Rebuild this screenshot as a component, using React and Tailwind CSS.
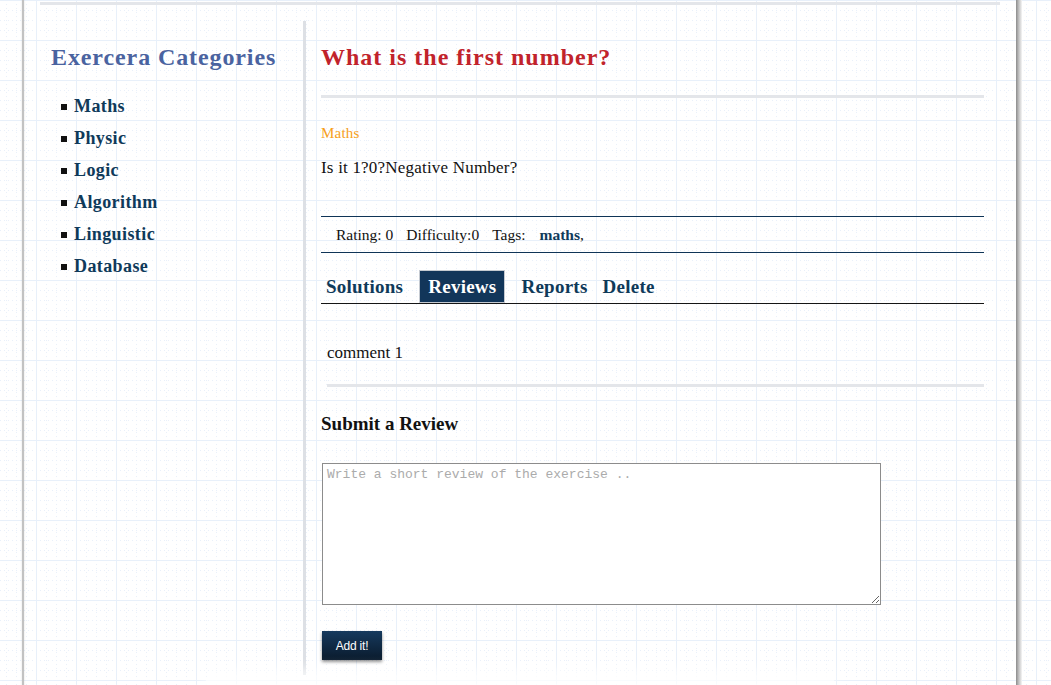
import React from 'react';

const serif = "font-['Liberation_Serif',serif]";

const categories = ['Maths', 'Physic', 'Logic', 'Algorithm', 'Linguistic', 'Database'];

function Sidebar() {
  return (
    <aside className="w-[279px] pt-[22px] pl-[27px]">
      <h2 className={`${serif} text-[24px] leading-[28px] font-bold tracking-[0.9px] text-[#4a63a0]`}>
        Exercera Categories
      </h2>
      <ul className="mt-[19px] pl-[10px]">
        {categories.map((c) => (
          <li key={c} className="flex items-center h-[32px]">
            <span className="w-[6px] h-[6px] bg-[#111] mt-[2px] mr-[7px]" />
            <a className={`${serif} text-[18px] leading-[32px] font-bold tracking-[0.4px] text-[#0f3a5a]`}>{c}</a>
          </li>
        ))}
      </ul>
    </aside>
  );
}

function Tabs() {
  return (
    <div className={`${serif} flex items-end mt-[17px] border-b border-[#151515] text-[19px] font-bold tracking-[0.25px] text-[#0f3a5a]`}>
      <span className="ml-[5px] leading-[33px] mr-[16px]">Solutions</span>
      <span className="h-[33px] leading-[32px] px-[8px] bg-[#12365a] text-white border border-[#c5cad1] mr-[16px]">
        Reviews
      </span>
      <span className="leading-[33px] mr-[15px]">Reports</span>
      <span className="leading-[33px]">Delete</span>
    </div>
  );
}

function Main() {
  return (
    <main className="ml-[15px] w-[663px] pt-[22px] pb-[15px]">
      <h1 className={`${serif} text-[24px] leading-[28px] font-bold tracking-[1px] text-[#c1232b]`}>
        What is the first number?
      </h1>
      <div className="mt-[24px] h-[3px] bg-[#e4e6ea]" />

      <p className={`${serif} mt-[25px] text-[15px] leading-[20px] tracking-[0.2px] text-[#f7a01a]`}>Maths</p>
      <p className={`${serif} mt-[13px] text-[17px] leading-[24px] tracking-[0.2px] text-[#111]`}>
        Is it 1?0?Negative Number?
      </p>

      <div className={`${serif} mt-[36px] h-[37px] border-y border-[#0f3457] flex items-center pl-[15px] text-[15.5px] text-[#111]`}>
        <span>Rating: 0</span>
        <span className="ml-[13px]">Difficulty:0</span>
        <span className="ml-[13px]">Tags:</span>
        <span className="ml-[14px]">
          <b className="text-[#0f3a5a]">maths</b>,
        </span>
      </div>

      <Tabs />

      <p className={`${serif} mt-[37px] pl-[6px] text-[17px] leading-[24px] text-[#111]`}>comment 1</p>
      <div className="mt-[19px] ml-[6px] h-[3px] bg-[#e4e6ea]" />

      <h3 className={`${serif} mt-[25px] text-[19px] leading-[24px] font-bold text-[#111]`}>Submit a Review</h3>

      <textarea
        placeholder="Write a short review of the exercise .."
        className="block mt-[27px] ml-[1px] w-[559px] h-[142px] border border-[#8c8c8c] bg-white px-[4px] py-[3px] font-['Liberation_Mono',monospace] text-[13px] leading-[15px] text-[#222] placeholder:text-[#ababab] outline-none"
      />

      <button className="block mt-[26px] ml-[1px] w-[60px] h-[29px] bg-gradient-to-b from-[#163a5e] to-[#0a1b2d] text-white font-['Liberation_Sans',Arial,sans-serif] text-[12px] tracking-[-0.2px] shadow-[0_2px_3px_rgba(0,0,0,0.45)]">
        Add it!
      </button>
    </main>
  );
}

export default function App() {
  return (
    <div className="min-h-screen w-full overflow-hidden bg-white bg-[image:linear-gradient(to_right,#e8f0fa_1px,transparent_1px),linear-gradient(to_bottom,#e8f0fa_1px,transparent_1px),radial-gradient(circle_at_0_0,#e9f0fa_1px,transparent_1.2px),radial-gradient(circle_at_0_0,#e9f0fa_1px,transparent_1.2px)] bg-[size:40px_40px,40px_40px,4px_10px,10px_4px] bg-[position:36px_0,0_0,0_0,6px_0]">
      <div className="flex ml-[22px] w-[1000px]">
        <div className="w-[2px] bg-[#c2c2c2] shadow-[0_0_2px_rgba(0,0,0,0.15)]" />
        <div className="flex-1 flex flex-col">
          <div className="mt-[2px] ml-[16px] w-[960px] h-[3px] bg-[#e4e6ea]" />
          <div className="flex mt-[16px]">
            <Sidebar />
            <div className="w-[3px] bg-[#dde0e5]" />
            <Main />
          </div>
          <div className="mx-[180px] h-[12px] rounded-t-full bg-white/70 shadow-[0_-4px_14px_rgba(255,255,255,0.95)]" />
        </div>
        <div className="w-[6px] bg-gradient-to-r from-[#8c8c8c] via-[#c4c4c4] to-[#f6f6f6]" />
      </div>
    </div>
  );
}
